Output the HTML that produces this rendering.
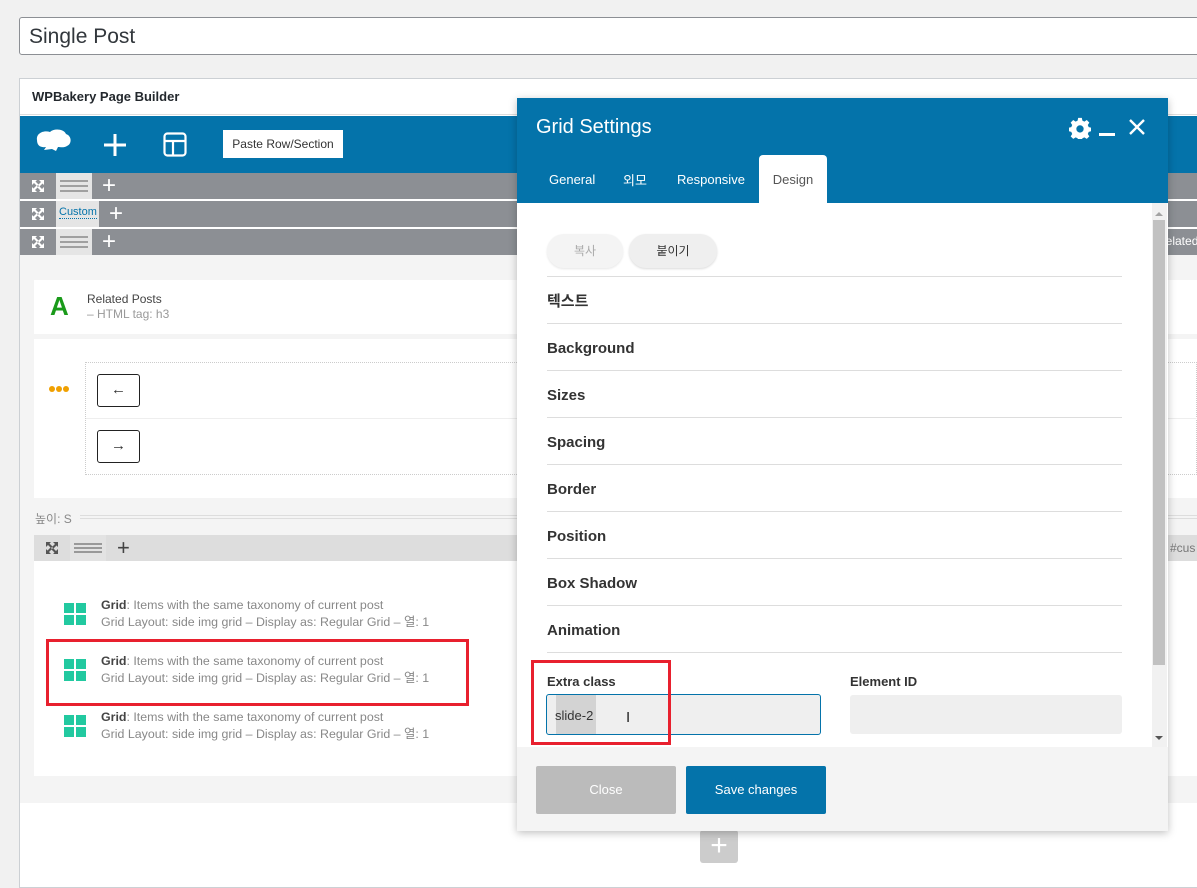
<!DOCTYPE html>
<html><head><meta charset="utf-8">
<style>
*{box-sizing:border-box;margin:0;padding:0}
body{width:1197px;height:880px;overflow:hidden;background:#f1f1f1;font-family:"Liberation Sans","Noto Sans CJK KR",sans-serif;position:relative;color:#23282d}
.abs{position:absolute}
.grow{position:absolute;left:20px;width:1177px;height:26px;background:#8c8f94}
.drag{position:absolute;left:36px;top:0;width:36px;height:26px;background:#e5e5e5}
.drag i{position:absolute;left:4px;width:28px;height:2px;background:#a0a0a0}
.pl{position:absolute;color:#fff;font-size:24px;line-height:26px;font-weight:300}
.sec{position:absolute;width:575px;border-top:1px solid #ddd;font-size:15px;font-weight:bold;color:#333}
.gi{position:absolute;width:420px;font-size:12.4px;color:#888;line-height:17px}
.gi b{color:#444;font-weight:bold}
.gicon{position:absolute}
</style></head><body>
<div class="abs" style="left:19px;top:17px;width:1190px;height:38px;background:#fff;border:1px solid #8c8f94;border-radius:3px;font-size:21px;line-height:38px;padding-left:9px;color:#32373c">Single Post</div>
<div class="abs" style="left:19px;top:78px;width:1190px;height:810px;background:#fff;border:1px solid #ccd0d4"></div>
<div class="abs" style="left:32px;top:89px;font-size:13px;font-weight:bold;color:#23282d">WPBakery Page Builder</div>
<div class="abs" style="left:20px;top:114px;width:1177px;height:1px;background:#ddd"></div>
<div class="abs" style="left:20px;top:116px;width:1177px;height:57px;background:#0473aa"></div>
<svg class="abs" style="left:34px;top:128px" width="38" height="30" viewBox="0 0 38 30"><path d="M3 12 C2 5 10 2 16 4 C20 0 30 1 32 6 C38 8 38 16 33 18 C30 20 26 19 24 19 L22 23 L18 21 L10 22 L12 19 C6 20 3 17 3 12Z" fill="#fff"/></svg>
<svg class="abs" style="left:103px;top:133px" width="24" height="24"><path d="M12 1V23M1 12H23" stroke="#fff" stroke-width="3"/></svg>
<svg class="abs" style="left:163px;top:132px" width="24" height="25"><rect x="1.5" y="1.5" width="21" height="22" rx="3" fill="none" stroke="#fff" stroke-width="2.2"/><path d="M2 9H22M10 9V23" stroke="#fff" stroke-width="2.2"/></svg>
<div class="abs" style="left:223px;top:130px;width:120px;height:28px;background:#fff;font-size:12px;line-height:28px;text-align:center;color:#333">Paste Row/Section</div>

<svg width="0" height="0" style="position:absolute"><defs><g id="ex"><path d="M1 1h5l-1.5 1.5 3 3-1.5 1.5-3-3L1 6zM13 1v5l-1.5-1.5-3 3-1.5-1.5 3-3L8 1zM1 13V8l1.5 1.5 3-3 1.5 1.5-3 3L6 13zM13 13H8l1.5-1.5-3-3 1.5-1.5 3 3L13 8z" fill="#fff"/></g></defs></svg>

<div class="grow" style="top:173px"><svg class="abs" style="left:11px;top:6px" width="14" height="14"><use href="#ex"/></svg><div class="drag"><i style="top:7px"></i><i style="top:12px"></i><i style="top:17px"></i></div><div class="pl" style="left:82px">+</div></div>
<div class="grow" style="top:201px"><svg class="abs" style="left:11px;top:6px" width="14" height="14"><use href="#ex"/></svg><div class="drag" style="width:43px;font-size:11px;color:#0473aa;line-height:22px;padding-left:3px"><span style="border-bottom:1px dotted #0473aa">Custom</span></div><div class="pl" style="left:89px">+</div></div>
<div class="grow" style="top:229px"><svg class="abs" style="left:11px;top:6px" width="14" height="14"><use href="#ex"/></svg><div class="drag"><i style="top:7px"></i><i style="top:12px"></i><i style="top:17px"></i></div><div class="pl" style="left:82px">+</div><div class="abs" style="left:1137px;top:5px;font-size:12px;color:#fff">Related</div></div>

<div class="abs" style="left:20px;top:255px;width:1177px;height:548px;background:#f4f4f4"></div>
<div class="abs" style="left:34px;top:280px;width:1163px;height:54px;background:#fff"></div>
<div class="abs" style="left:50px;top:291px;font-size:26px;font-weight:bold;color:#1a9a1a;font-family:'Liberation Sans',sans-serif">A</div>
<div class="abs" style="left:87px;top:292px;font-size:12px;color:#444">Related Posts</div>
<div class="abs" style="left:87px;top:307px;font-size:12px;color:#999">– HTML tag: h3</div>
<div class="abs" style="left:34px;top:339px;width:1163px;height:159px;background:#fff"></div>
<div class="abs" style="left:49px;top:386px;width:22px;height:8px"><span style="position:absolute;left:0;width:6px;height:6px;border-radius:3px;background:#f0a000"></span><span style="position:absolute;left:7px;width:6px;height:6px;border-radius:3px;background:#f0a000"></span><span style="position:absolute;left:14px;width:6px;height:6px;border-radius:3px;background:#f0a000"></span></div>
<div class="abs" style="left:85px;top:362px;width:1112px;height:113px;border:1px dotted #ccc"></div>
<div class="abs" style="left:86px;top:418px;width:1111px;height:1px;background:#eee"></div>
<div class="abs" style="left:97px;top:374px;width:43px;height:33px;border:1px solid #222;border-radius:3px;text-align:center;line-height:30px;font-size:15px;color:#333">←</div>
<div class="abs" style="left:97px;top:430px;width:43px;height:33px;border:1px solid #222;border-radius:3px;text-align:center;line-height:30px;font-size:15px;color:#333">→</div>
<div class="abs" style="left:35px;top:510px;font-size:12px;color:#888">높이: S</div>
<div class="abs" style="left:80px;top:515px;width:1117px;height:4px;border-top:1px solid #ddd;border-bottom:1px solid #ddd"></div>
<div class="abs" style="left:34px;top:535px;width:1163px;height:26px;background:#dddddd"></div>
<svg class="abs" style="left:45px;top:541px" width="14" height="14"><path d="M1 1h5l-1.5 1.5 3 3-1.5 1.5-3-3L1 6zM13 1v5l-1.5-1.5-3 3-1.5-1.5 3-3L8 1zM1 13V8l1.5 1.5 3-3 1.5 1.5-3 3L6 13zM13 13H8l1.5-1.5-3-3 1.5-1.5 3 3L13 8z" fill="#555"/></svg>
<div class="abs" style="left:70px;top:535px;width:36px;height:26px;background:#e3e3e3"><i style="position:absolute;left:4px;top:8px;width:28px;height:2px;background:#999"></i><i style="position:absolute;left:4px;top:12px;width:28px;height:2px;background:#999"></i><i style="position:absolute;left:4px;top:16px;width:28px;height:2px;background:#999"></i></div>
<div class="abs" style="left:117px;top:535px;font-size:22px;line-height:26px;color:#444">+</div>
<div class="abs" style="left:1170px;top:541px;font-size:12px;color:#777">#cus</div>
<div class="abs" style="left:34px;top:561px;width:1163px;height:215px;background:#fff"></div>
<svg width="0" height="0" style="position:absolute"><defs><g id="gr"><rect x="0" y="0" width="10" height="10" fill="#22c9a0"/><rect x="12" y="0" width="10" height="10" fill="#22c9a0"/><rect x="0" y="12" width="10" height="10" fill="#22c9a0"/><rect x="12" y="12" width="10" height="10" fill="#22c9a0"/></g></defs></svg>
<div class="gi" style="top:597px;left:101px"><svg class="gicon" style="left:-37px;top:6px" width="22" height="22"><use href="#gr"/></svg><b>Grid</b>: Items with the same taxonomy of current post<br>Grid Layout: side img grid – Display as: Regular Grid – 열: 1</div>
<div class="gi" style="top:653px;left:101px"><svg class="gicon" style="left:-37px;top:6px" width="22" height="22"><use href="#gr"/></svg><b>Grid</b>: Items with the same taxonomy of current post<br>Grid Layout: side img grid – Display as: Regular Grid – 열: 1</div>
<div class="gi" style="top:709px;left:101px"><svg class="gicon" style="left:-37px;top:6px" width="22" height="22"><use href="#gr"/></svg><b>Grid</b>: Items with the same taxonomy of current post<br>Grid Layout: side img grid – Display as: Regular Grid – 열: 1</div>
<div class="abs" style="left:46px;top:639px;width:423px;height:67px;border:3px solid #e8202e"></div>
<div class="abs" style="left:700px;top:830px;width:38px;height:33px;background:#ccc;border-radius:3px;color:#fff;font-size:30px;line-height:31px;text-align:center">+</div>

<div class="abs" style="left:517px;top:98px;width:651px;height:733px;background:#fff;box-shadow:0 2px 8px rgba(0,0,0,.25)"></div>
<div class="abs" style="left:517px;top:98px;width:651px;height:105px;background:#0473aa"></div>
<div class="abs" style="left:536px;top:116px;font-size:20px;color:#fff">Grid Settings</div>
<svg class="abs" style="left:1069px;top:117px" width="22" height="22" viewBox="0 0 24 24"><path d="M10 1h4l.6 3 2.2 1 2.6-1.7 2.8 2.8L20.5 8.7l1 2.3 2.5.6v4l-2.5.6-1 2.3 1.7 2.6-2.8 2.8-2.6-1.7-2.2 1-.6 2.8h-4l-.6-2.8-2.2-1-2.6 1.7-2.8-2.8 1.7-2.6-1-2.3L0 15.6v-4l2.5-.6 1-2.3L1.8 6.1 4.6 3.3l2.6 1.7 2.2-1z" fill="#fff"/><circle cx="12" cy="13" r="4" fill="#0473aa"/></svg>
<div class="abs" style="left:1099px;top:133px;width:16px;height:3px;background:#fff"></div>
<svg class="abs" style="left:1129px;top:119px" width="16" height="16"><path d="M1 1L15 15M15 1L1 15" stroke="#fff" stroke-width="2.4"/></svg>
<div class="abs" style="left:549px;top:172px;font-size:13px;color:#fff">General</div>
<div class="abs" style="left:623px;top:170px;font-size:13px;color:#fff">외모</div>
<div class="abs" style="left:677px;top:172px;font-size:13px;color:#fff">Responsive</div>
<div class="abs" style="left:759px;top:155px;width:68px;height:48px;background:#fff;border-radius:4px 4px 0 0;font-size:13px;color:#555;text-align:center;line-height:50px">Design</div>
<div class="abs" style="left:1152px;top:203px;width:15px;height:544px;background:#f1f1f1"></div>
<div class="abs" style="left:1153px;top:220px;width:12px;height:445px;background:#c1c1c1"></div>
<div class="abs" style="left:1155px;top:208px;width:0;height:0;border:4px solid transparent;border-bottom:4px solid #a3a3a3"></div>
<div class="abs" style="left:1155px;top:736px;width:0;height:0;border:4px solid transparent;border-top:4px solid #555"></div>
<div class="abs" style="left:547px;top:234px;width:76px;height:34px;border-radius:17px;background:#f4f4f4;font-size:12px;color:#aaa;text-align:center;line-height:34px;box-shadow:0 1px 2px rgba(0,0,0,.1)">복사</div>
<div class="abs" style="left:629px;top:234px;width:88px;height:34px;border-radius:17px;background:#efefef;font-size:12px;color:#333;text-align:center;line-height:34px;box-shadow:0 1px 2px rgba(0,0,0,.15)">붙이기</div>
<div class="sec" style="left:547px;top:276px;height:47px;padding-top:13px">텍스트</div>
<div class="sec" style="left:547px;top:323px;height:47px;padding-top:16px">Background</div>
<div class="sec" style="left:547px;top:370px;height:47px;padding-top:16px">Sizes</div>
<div class="sec" style="left:547px;top:417px;height:47px;padding-top:16px">Spacing</div>
<div class="sec" style="left:547px;top:464px;height:47px;padding-top:16px">Border</div>
<div class="sec" style="left:547px;top:511px;height:47px;padding-top:16px">Position</div>
<div class="sec" style="left:547px;top:558px;height:47px;padding-top:16px">Box Shadow</div>
<div class="sec" style="left:547px;top:605px;height:47px;padding-top:16px">Animation</div>
<div class="abs" style="left:547px;top:652px;width:575px;height:1px;background:#ddd"></div>
<div class="abs" style="left:547px;top:674px;font-size:13px;font-weight:bold;color:#333">Extra class</div>
<div class="abs" style="left:850px;top:674px;font-size:13px;font-weight:bold;color:#333">Element ID</div>
<div class="abs" style="left:546px;top:694px;width:275px;height:41px;background:#efefef;border:1px solid #0473aa;border-radius:3px"></div>
<div class="abs" style="left:556px;top:695px;width:40px;height:39px;background:#d3d3d3"></div>
<div class="abs" style="left:555px;top:708px;font-size:13px;color:#333">slide-2</div>
<div class="abs" style="left:626px;top:709px;font-size:15px;color:#222">I</div>
<div class="abs" style="left:850px;top:695px;width:272px;height:39px;background:#efefef;border-radius:3px"></div>
<div class="abs" style="left:531px;top:660px;width:140px;height:85px;border:3px solid #e8202e"></div>
<div class="abs" style="left:517px;top:747px;width:651px;height:84px;background:#f4f4f4"></div>
<div class="abs" style="left:536px;top:766px;width:140px;height:48px;background:#bbb;border-radius:2px;color:#fff;font-size:13px;text-align:center;line-height:48px">Close</div>
<div class="abs" style="left:686px;top:766px;width:140px;height:48px;background:#0473aa;border-radius:2px;color:#fff;font-size:13px;text-align:center;line-height:48px">Save changes</div>
</body></html>
